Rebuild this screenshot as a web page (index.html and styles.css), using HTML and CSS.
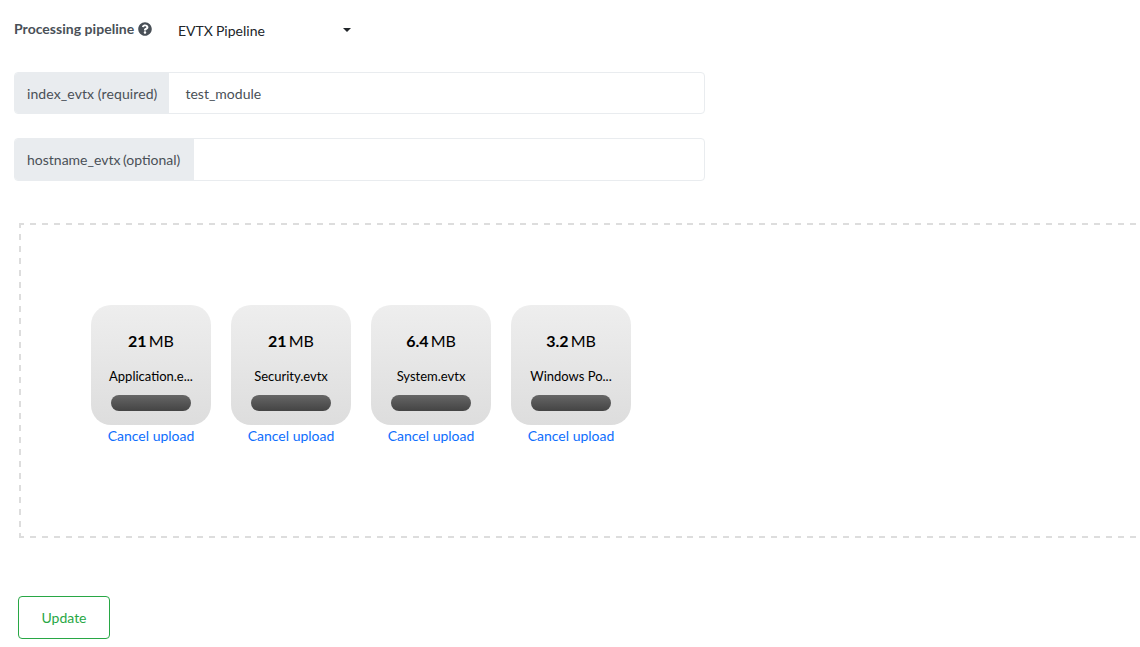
FILE: index.html
```html
<!DOCTYPE html>
<html lang="en">
<head>
<meta charset="utf-8">
<title>Upload</title>
<link rel="stylesheet" href="styles.css">
</head>
<body>
<div class="page">
  <div class="pipeline">
    <span class="pipeline-label">Processing pipeline</span>
    <svg class="help" viewBox="0 0 512 512" aria-hidden="true"><path d="M504 256c0 137-111 248-248 248S8 393 8 256C8 119 119 8 256 8s248 111 248 248zM263 90c-54 0-89 23-116 64-4 5-2 12 3 16l35 26c5 4 13 3 17-2 18-23 30-36 57-36 20 0 45 13 45 32 0 15-12 22-32 33-23 13-54 30-54 71v4c0 7 5 12 12 12h56c7 0 12-5 12-12v-1c0-29 84-30 84-107 0-58-60-100-119-100zm-7 246c-26 0-46 21-46 46s20 46 46 46 46-21 46-46-20-46-46-46z"/></svg>
    <div class="select">
      <span>EVTX Pipeline</span>
      <span class="caret"></span>
    </div>
  </div>

  <div class="input-group first">
    <span class="addon">index_evtx (required)</span>
    <span class="value">test_module</span>
  </div>
  <div class="input-group second">
    <span class="addon">hostname_evtx (optional)</span>
    <span class="value"></span>
  </div>

  <div class="dropzone">
    <div class="file">
      <div class="thumb">
        <div class="size"><strong>21</strong> MB</div>
        <div class="name">Application.e...</div>
        <div class="progress"></div>
      </div>
      <a class="cancel" href="#">Cancel upload</a>
    </div>
    <div class="file">
      <div class="thumb">
        <div class="size"><strong>21</strong> MB</div>
        <div class="name">Security.evtx</div>
        <div class="progress"></div>
      </div>
      <a class="cancel" href="#">Cancel upload</a>
    </div>
    <div class="file">
      <div class="thumb">
        <div class="size"><strong>6.4</strong> MB</div>
        <div class="name">System.evtx</div>
        <div class="progress"></div>
      </div>
      <a class="cancel" href="#">Cancel upload</a>
    </div>
    <div class="file">
      <div class="thumb">
        <div class="size"><strong>3.2</strong> MB</div>
        <div class="name">Windows Po...</div>
        <div class="progress"></div>
      </div>
      <a class="cancel" href="#">Cancel upload</a>
    </div>
  </div>

  <button class="update" type="button">Update</button>
</div>
</body>
</html>
```
FILE: styles.css
```css
* { box-sizing: border-box; }
html, body { margin: 0; padding: 0; background: #fff; height: 100%; overflow: hidden; }
body { font-family: Lato, sans-serif; font-size: 14px; color: #495057; }
.page { width: 1136px; height: 647px; overflow: hidden; padding: 19px 0 0 14px; }

.pipeline { display: flex; align-items: center; height: 20px; }
.pipeline-label { font-weight: 700; color: #495057; width: 120px; margin-bottom: 2px; letter-spacing: 0.03px; white-space: nowrap; }
.help { width: 14px; height: 14px; margin-left: 4px; fill: #495057; flex: none; }
.select { display: flex; align-items: center; width: 173px; margin-left: 26px; color: #212529; padding-top: 3px; word-spacing: -0.5px; }
.caret { width: 0; height: 0; margin-left: auto; margin-top: -2px; border-top: 4px solid #212529; border-left: 4px solid transparent; border-right: 4px solid transparent; }

.input-group { display: flex; width: 691px; border: 1px solid #e9ecef; border-radius: 4px; overflow: hidden; }
.input-group.first { height: 42px; margin-top: 33px; }
.input-group.second { height: 43px; margin-top: 24px; }
.addon { display: flex; align-items: center; background: #e9ecef; padding: 0 12px; margin: -1px 0 -1px 0; white-space: nowrap; }
.first .addon { letter-spacing: 0.1px; }
.second .addon { padding-right: 14px; word-spacing: -1px; }
.value { display: flex; align-items: center; padding-left: 16px; }

.dropzone {
  display: flex; align-items: flex-start; gap: 20px;
  width: 1200px; height: 315px; margin: 42px 0 0 5px; padding: 82px 0 0 72px;
  background-image:
    repeating-linear-gradient(to right, #ddd 0 5px, transparent 5px 10.955px, #ddd 10.955px 11.955px),
    repeating-linear-gradient(to right, #ddd 0 5px, transparent 5px 10.955px, #ddd 10.955px 11.955px),
    repeating-linear-gradient(to bottom, #ddd 0 5px, transparent 5px 10.955px, #ddd 10.955px 11.955px);
  background-size: 100% 2px, 100% 2px, 2px 100%;
  background-position: left top, left bottom, left top;
  background-repeat: no-repeat;
}
.file { display: flex; flex-direction: column; align-items: center; width: 120px; }
.thumb { display: flex; flex-direction: column; align-items: center; width: 120px; height: 120px; border-radius: 20px; background: linear-gradient(to bottom, #eee, #ddd); color: #000; }
.size { margin-top: 26px; font-size: 16px; line-height: 20px; word-spacing: -2px; }
.size strong { font-weight: 700; }
.name { margin-top: 15px; line-height: 20px; font-size: 13px; white-space: nowrap; }
.progress { width: 80px; height: 16px; margin-top: 9px; border-radius: 8px; background: linear-gradient(to bottom, #666, #444); }
.cancel { margin-top: 1px; line-height: 20px; color: #0d6efd; text-decoration: none; white-space: nowrap; }

.update { display: block; width: 92px; height: 43px; margin: 58px 0 0 4px; background: #fff; border: 1px solid #28a745; border-radius: 4px; color: #28a745; font: 14px Lato, sans-serif; }
```
